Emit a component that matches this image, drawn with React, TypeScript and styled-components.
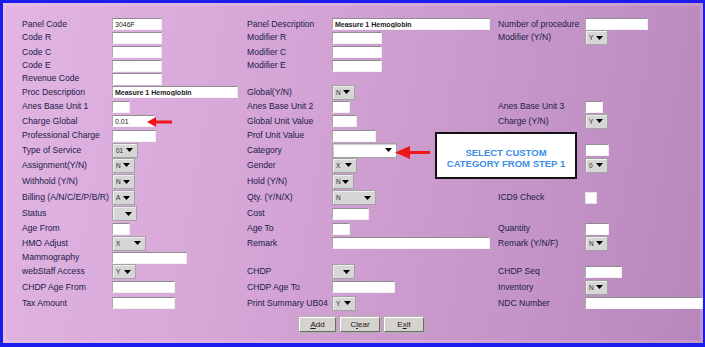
import React from 'react';
import styled, { createGlobalStyle } from 'styled-components';

const GlobalStyle = createGlobalStyle`
  html, body {
    margin: 0;
    padding: 0;
    background: #ffffff;
  }
  body {
    font-family: "Liberation Sans", Arial, sans-serif;
  }
`;

// row heights picked so each row centre lands on the reference line
const rowHeights = [
  12.75, 14.25, 14.25, 13, 12.75, 14.5, 14.5, 14.25, 14.5, 14.5, 16.25, 16.25, 16, 16, 14.25, 14.25, 14.5, 14.25,
  16, 16,
];

const Frame = styled.div`
  position: relative;
  box-sizing: border-box;
  width: 705px;
  height: 347px;
  overflow: hidden;
  border-style: solid;
  border-color: #1c1cee;
  border-width: 3px 2px 4px 3px;
  padding: 15px 0 0 19px;
  background: linear-gradient(100deg, #e2b5e2 0%, #d6a6d7 35%, #c897ca 68%, #b886bc 100%);
  box-shadow: inset 0 0 0 3px rgba(255, 255, 255, 0.14);
`;

const FormGrid = styled.div`
  display: grid;
  grid-template-columns: 90px 135px 85px 166px 87px 118px;
  grid-template-rows: ${rowHeights.map((h) => `${h}px`).join(' ')};
  align-items: center;
`;

const Label = styled.span`
  font-size: 8.6px;
  line-height: 11px;
  color: #20204a;
  white-space: nowrap;
`;

const Cell = styled.div`
  display: flex;
  align-items: center;
`;

const TextBox = styled.input<{ $w: number; $bold?: boolean }>`
  box-sizing: border-box;
  width: ${(p) => p.$w}px;
  height: 12px;
  margin: 0;
  padding: 0 0 0 2px;
  background: #ffffff;
  border-style: solid;
  border-width: 1px;
  border-color: #8c8c8c #ececec #f4f4f4 #a8a8a8;
  outline: none;
  font-family: "Liberation Sans", Arial, sans-serif;
  font-size: 7px;
  font-weight: ${(p) => (p.$bold ? 700 : 400)};
  color: #1a1a1a;
`;

const CheckBox = styled.div`
  box-sizing: border-box;
  width: 12px;
  height: 12px;
  background: #ffffff;
  border: 1px solid #e4e4e4;
`;

const SelectBox = styled.div<{ $w: number; $light?: boolean }>`
  box-sizing: border-box;
  width: ${(p) => p.$w}px;
  height: 15px;
  display: flex;
  align-items: center;
  justify-content: space-between;
  padding: 0 4px 0 3px;
  background: ${(p) => (p.$light ? '#ffffff' : '#d6d6d6')};
  border: 1px solid #a2a2a2;
  box-shadow: inset 1px 1px 0 ${(p) => (p.$light ? '#d0d0d0' : '#efefef')};
  font-size: 6.5px;
  color: #2a2a2a;
`;

const ButtonBar = styled.div`
  display: flex;
  gap: 4px;
  margin-top: 6px;
  padding-left: 277px;
`;

const Button = styled.button<{ $w: number }>`
  box-sizing: border-box;
  width: ${(p) => p.$w}px;
  height: 15px;
  padding: 0;
  background: #d6d3ce;
  border-style: solid;
  border-width: 1px;
  border-color: #ffffff #6a6a6a #6a6a6a #ffffff;
  box-shadow: 0 0 0 1px #b4b1ac;
  font-family: "Liberation Sans", Arial, sans-serif;
  font-size: 8px;
  color: #151515;
  u {
    text-decoration: underline;
  }
`;

const Callout = styled.div`
  position: absolute;
  left: 432px;
  top: 129px;
  box-sizing: border-box;
  width: 142px;
  height: 47px;
  padding-top: 4px;
  display: flex;
  flex-direction: column;
  align-items: center;
  justify-content: center;
  background: #ffffff;
  border: 2px solid #111111;
  font-size: 9.5px;
  font-weight: 700;
  line-height: 11px;
  color: #3b8ee6;
  text-align: center;
`;

const Pointer = styled.svg`
  position: absolute;
`;

type Field =
  | { kind: 'input'; w: number; value?: string; bold?: boolean }
  | { kind: 'select'; w: number; value?: string; light?: boolean }
  | { kind: 'check' };

type Item = { label?: string; field?: Field };

const inp = (w: number, value = '', bold = false): Field => ({ kind: 'input', w, value, bold });
const sel = (w: number, value = '', light = false): Field => ({ kind: 'select', w, value, light });

const rows: Item[][] = [
  [
    { label: 'Panel Code', field: inp(50, '3046F') },
    { label: 'Panel Description', field: inp(158, 'Measure 1 Hemoglobin', true) },
    { label: 'Number of procedure', field: inp(63) },
  ],
  [
    { label: 'Code R', field: inp(50) },
    { label: 'Modifier R', field: inp(50) },
    { label: 'Modifier (Y/N)', field: sel(23, 'Y') },
  ],
  [{ label: 'Code C', field: inp(50) }, { label: 'Modifier C', field: inp(50) }, {}],
  [{ label: 'Code E', field: inp(50) }, { label: 'Modifier E', field: inp(50) }, {}],
  [{ label: 'Revenue Code', field: inp(50) }, {}, {}],
  [
    { label: 'Proc Description', field: inp(126, 'Measure 1 Hemoglobin', true) },
    { label: 'Global(Y/N)', field: sel(23, 'N') },
    {},
  ],
  [
    { label: 'Anes Base Unit 1', field: inp(18) },
    { label: 'Anes Base Unit 2', field: inp(18) },
    { label: 'Anes Base Unit 3', field: inp(18) },
  ],
  [
    { label: 'Charge Global', field: inp(43, '0.01') },
    { label: 'Global Unit Value', field: inp(25) },
    { label: 'Charge (Y/N)', field: sel(23, 'Y') },
  ],
  [{ label: 'Professional Charge', field: inp(44) }, { label: 'Prof Unit Value', field: inp(44) }, {}],
  [
    { label: 'Type of Service', field: sel(26, '01') },
    { label: 'Category', field: sel(65, '', true) },
    { field: inp(24) },
  ],
  [
    { label: 'Assignment(Y/N)', field: sel(23, 'N') },
    { label: 'Gender', field: sel(25, 'X') },
    { field: sel(23, '0') },
  ],
  [{ label: 'Withhold (Y/N)', field: sel(23, 'N') }, { label: 'Hold (Y/N)', field: sel(22, 'N') }, {}],
  [
    { label: 'Billing (A/N/C/E/P/B/R)', field: sel(23, 'A') },
    { label: 'Qty. (Y/N/X)', field: sel(44, 'N') },
    { label: 'ICD9 Check', field: { kind: 'check' } },
  ],
  [{ label: 'Status', field: sel(25) }, { label: 'Cost', field: inp(37) }, {}],
  [
    { label: 'Age From', field: inp(18) },
    { label: 'Age To', field: inp(18) },
    { label: 'Quantity', field: inp(24) },
  ],
  [
    { label: 'HMO Adjust', field: sel(34, 'X') },
    { label: 'Remark', field: inp(158) },
    { label: 'Remark (Y/N/F)', field: sel(23, 'N') },
  ],
  [{ label: 'Mammography', field: inp(75) }, {}, {}],
  [
    { label: 'webStaff Access', field: sel(24, 'Y') },
    { label: 'CHDP', field: sel(23) },
    { label: 'CHDP Seq', field: inp(37) },
  ],
  [
    { label: 'CHDP Age From', field: inp(63) },
    { label: 'CHDP Age To', field: inp(63) },
    { label: 'Inventory', field: sel(23, 'N') },
  ],
  [
    { label: 'Tax Amount', field: inp(63) },
    { label: 'Print Summary UB04', field: sel(24, 'Y') },
    { label: 'NDC Number', field: inp(118) },
  ],
];

function DropArrow() {
  return (
    <svg width="7" height="4" viewBox="0 0 7 4">
      <polygon points="0,0 7,0 3.5,4" fill="#000" />
    </svg>
  );
}

function FieldView({ field }: { field?: Field }) {
  if (!field) return <Cell />;
  if (field.kind === 'check') {
    return (
      <Cell>
        <CheckBox />
      </Cell>
    );
  }
  if (field.kind === 'select') {
    return (
      <Cell>
        <SelectBox $w={field.w} $light={field.light}>
          <span>{field.value}</span>
          <DropArrow />
        </SelectBox>
      </Cell>
    );
  }
  return (
    <Cell>
      <TextBox $w={field.w} $bold={field.bold} value={field.value} readOnly />
    </Cell>
  );
}

export default function App() {
  return (
    <>
      <GlobalStyle />
      <Frame>
        <FormGrid>
          {rows.map((row, i) => (
            <React.Fragment key={i}>
              {row.map((item, j) => (
                <React.Fragment key={j}>
                  <Cell>{item.label && <Label>{item.label}</Label>}</Cell>
                  <FieldView field={item.field} />
                </React.Fragment>
              ))}
            </React.Fragment>
          ))}
        </FormGrid>
        <ButtonBar>
          <Button $w={37}>
            <u>A</u>dd
          </Button>
          <Button $w={40}>
            C<u>l</u>ear
          </Button>
          <Button $w={40}>
            E<u>x</u>it
          </Button>
        </ButtonBar>

        <Pointer style={{ left: 144, top: 114 }} width="25" height="10" viewBox="0 0 25 10">
          <polygon points="0,5 9,0 9,3.5 25,3.5 25,6.5 9,6.5 9,10" fill="#ee1616" />
        </Pointer>
        <Pointer style={{ left: 392, top: 143 }} width="35" height="13" viewBox="0 0 35 13">
          <polygon points="0,6.5 15,0 15,5 35,5 35,8 15,8 15,13" fill="#ee1616" />
        </Pointer>

        <Callout>
          <span>SELECT CUSTOM</span>
          <span>CATEGORY FROM STEP 1</span>
        </Callout>
      </Frame>
    </>
  );
}
